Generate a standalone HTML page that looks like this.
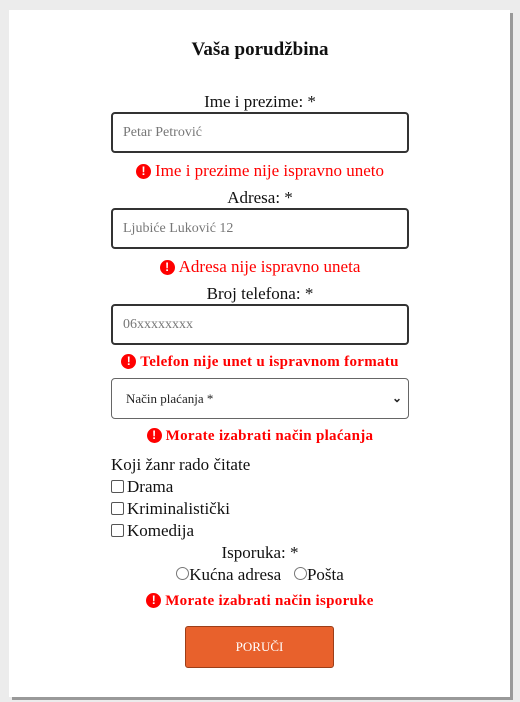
<!DOCTYPE html>
<html><head><meta charset="utf-8"><style>
*{box-sizing:border-box;margin:0;padding:0}
body{width:520px;height:702px;background:#ececec;font-family:"Liberation Serif",serif;position:relative;overflow:hidden;color:#111}
.card{position:absolute;left:9px;top:10px;width:501px;height:687px;background:#fff;box-shadow:3px 3px 0 #999}
.a{position:absolute;white-space:nowrap}
.c{left:0;width:520px;text-align:center}
.lbl{font-size:17px}
.inp{position:absolute;left:111px;width:298px;height:41px;border:2px solid #333;border-radius:4px;font-size:14px;color:#777;padding:0 10px;line-height:37px}
.err{color:#f00;font-size:17px}
.errb{color:#f00;font-size:15px;font-weight:bold;letter-spacing:0.3px}
.ic{display:inline-block;width:15px;height:15px;border-radius:50%;background:#f00;color:#fff;font-size:12px;font-weight:bold;line-height:15px;text-align:center;vertical-align:1px;margin-right:4px;font-family:"Liberation Sans",sans-serif;letter-spacing:0}
.cb{display:inline-block;width:13px;height:13px;border:1px solid #555;border-radius:2px;vertical-align:-1px;margin-right:3px}
.rb{display:inline-block;width:13px;height:13px;border:1px solid #777;border-radius:50%;vertical-align:0px}
</style></head><body>
<div class="card"></div>
<div class="a c" style="top:39px;font-size:19px;font-weight:bold">Vaša porudžbina</div>
<div class="a c lbl" style="top:92px">Ime i prezime: *</div>
<div class="inp" style="top:112px">Petar Petrović</div>
<div class="a c err" style="top:161px"><span class="ic">!</span>Ime i prezime nije ispravno uneto</div>
<div class="a c lbl" style="top:188px">Adresa: *</div>
<div class="inp" style="top:208px">Ljubiće Luković 12</div>
<div class="a c err" style="top:257px"><span class="ic">!</span>Adresa nije ispravno uneta</div>
<div class="a c lbl" style="top:284px">Broj telefona: *</div>
<div class="inp" style="top:304px">06xxxxxxxx</div>
<div class="a c errb" style="top:354px"><span class="ic">!</span>Telefon nije unet u ispravnom formatu</div>
<div class="inp" style="top:378px;border:1px solid #666;color:#222;font-size:13px;padding-left:14px;line-height:39px">Način plaćanja *<span style="position:absolute;right:6px;top:0;font-size:12px;font-weight:bold">&#8964;</span></div>
<div class="a c errb" style="top:428px"><span class="ic">!</span>Morate izabrati način plaćanja</div>
<div class="a lbl" style="left:111px;top:455px">Koji žanr rado čitate</div>
<div class="a lbl" style="left:111px;top:477px"><span class="cb"></span>Drama</div>
<div class="a lbl" style="left:111px;top:499px"><span class="cb"></span>Kriminalistički</div>
<div class="a lbl" style="left:111px;top:521px"><span class="cb"></span>Komedija</div>
<div class="a c lbl" style="top:543px">Isporuka: *</div>
<div class="a c lbl" style="top:565px"><span class="rb"></span>Kućna adresa &nbsp;&nbsp;<span class="rb"></span>Pošta</div>
<div class="a c errb" style="top:593px"><span class="ic">!</span>Morate izabrati način isporuke</div>
<div class="a" style="left:185px;top:626px;width:149px;height:42px;background:#e8612c;border:1px solid #9c3e18;border-radius:3px;color:#fff;font-size:13px;text-align:center;line-height:40px">PORUČI</div>
</body></html>
